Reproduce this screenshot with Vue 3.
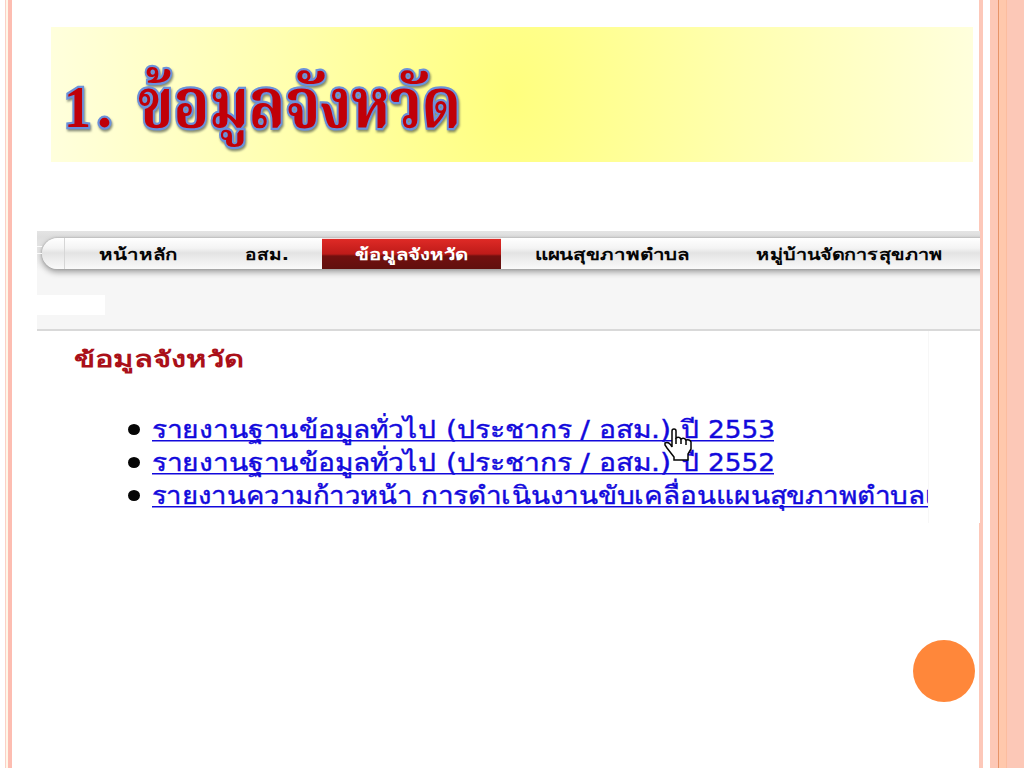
<template>
  <div class="slide">
    <div class="rail-left"></div>

    <main class="content">
      <header class="title-band">
        <svg class="title" width="420" height="110" role="img">
          <text class="title-text" x="13" y="75" textLength="27" lengthAdjust="spacingAndGlyphs">1</text>
          <text class="title-text" x="46" y="75" textLength="15" lengthAdjust="spacingAndGlyphs">.</text>
          <text class="title-text thai" x="87" y="75" textLength="323" lengthAdjust="spacingAndGlyphs">ข้อมูลจังหวัด</text>
        </svg>
      </header>

      <section class="site">
        <div class="site-top">
          <nav class="menu">
            <div class="menu-cap"></div>
            <a
              v-for="item in menu"
              :key="item.label"
              class="menu-item"
              :class="{ active: item.active }"
              :style="{ width: item.width + 'px' }"
            >
              <svg :width="item.text" height="32">
                <text x="0" y="22" :textLength="item.text" lengthAdjust="spacingAndGlyphs">{{ item.label }}</text>
              </svg>
            </a>
          </nav>
          <div class="blank-box"></div>
        </div>

        <div class="site-body">
          <svg class="heading" width="180" height="40">
            <text x="0" y="27" textLength="170" lengthAdjust="spacingAndGlyphs">ข้อมูลจังหวัด</text>
          </svg>
          <ul class="reports">
            <li v-for="(report, i) in reports" :key="i" class="report">
              <span class="bullet"></span>
              <svg class="report-link" :width="report.width" height="33">
                <text
                  v-for="part in report.parts"
                  :key="part.label"
                  :x="part.x"
                  y="25"
                  :textLength="part.width"
                  lengthAdjust="spacingAndGlyphs"
                >{{ part.label }}</text>
                <rect x="0" y="27" :width="report.width" height="1.5" />
              </svg>
            </li>
          </ul>
          <svg class="cursor" width="28" height="33" viewBox="0 0 28 33">
            <path
              d="M8 19V3Q8 1 10 1T12 3V10Q15 8 17 11Q20 9 22 12Q26 11 27 14V21L24 26V32H10V29L3 20L1 17V15Q5 13 8 19Z"
            />
            <path d="M12 10V16M17 11V16M22 12V17" />
          </svg>
        </div>
      </section>
    </main>

    <div class="rail-right"></div>
    <div class="dot"></div>
  </div>
</template>

<script setup>
const menu = [
  { label: 'หน้าหลัก', width: 146, text: 79 },
  { label: 'อสม.', width: 111, text: 44 },
  { label: 'ข้อมูลจังหวัด', width: 179, text: 113, active: true },
  { label: 'แผนสุขภาพตำบล', width: 222, text: 155 },
  { label: 'หมู่บ้านจัดการสุขภาพ', width: 253, text: 187 }
]

const yearReport = (year) => ({
  width: 622,
  parts: [
    { label: 'รายงานฐานข้อมูลทั่วไป', x: 0, width: 284 },
    { label: '(ประชากร / อสม.)', x: 294, width: 225 },
    { label: 'ปี', x: 529, width: 18 },
    { label: year, x: 556, width: 67 }
  ]
})

const reports = [
  yearReport('2553'),
  yearReport('2552'),
  // last title runs past the edge and gets cut off
  {
    width: 776,
    parts: [
      { label: 'รายงานความก้าวหน้า', x: 0, width: 260 },
      { label: 'การดำเนินงานขับเคลื่อนแผนสุขภาพตำบลเ', x: 269, width: 514 }
    ]
  }
]
</script>

<style>
body {
  margin: 0;
  background: #fff;
}
</style>

<style scoped>
.slide {
  position: relative;
  display: flex;
  width: 1024px;
  height: 768px;
  overflow: hidden;
  background: #fff;
  font-family: "DejaVu Sans", "Noto Sans", sans-serif;
}

.rail-left {
  flex: none;
  width: 12px;
  background: linear-gradient(to right, #fff 5px, #fbd0c5 5px 6px, #fff6e8 6px 8px, #fdbdb1 8px);
}

.rail-right {
  flex: none;
  width: 45px;
  background: linear-gradient(
    to right,
    #fdc8b9 4.5px,
    #fff 4.5px 11px,
    #fdc8b6 11px 19px,
    #e79468 19px 20px,
    #ffc8ac 20px 27px,
    #fcbd9f 27px 28px,
    #fcc8b7 28px
  );
}

.content {
  flex: none;
  width: 967px;
}

.title-band {
  width: 922px;
  height: 135px;
  margin: 27px 0 0 39px;
  background: radial-gradient(ellipse 461px 700px at 461px 67px, #ffff7e 0%, #ffffb0 50%, #ffffdc 100%);
}

.title {
  display: block;
  padding-top: 25px;
  overflow: visible;
  filter: drop-shadow(1px 2px 1px rgba(70, 80, 70, 0.65));
}

.title-text {
  font-family: "Liberation Serif", "Noto Serif Thai", serif;
  font-size: 60px;
  font-weight: bold;
  fill: #c00008;
  stroke: #6b91db;
  stroke-width: 4.5px;
  paint-order: stroke;
}

.thai {
  font-size: 69px;
}

.site {
  position: relative;
  z-index: 1;
  width: 943px;
  height: 292px;
  margin: 69px 0 0 25px;
  overflow: hidden;
  background: #fff;
}

.site-top {
  box-sizing: border-box;
  height: 100px;
  padding-top: 7px;
  border-bottom: 2px solid #d9d9d9;
  background: linear-gradient(#e4e4e4 0, #dedede 6px, #e4e4e4 16px, #f6f6f6 40px);
}

.menu {
  position: relative;
  display: flex;
  box-sizing: border-box;
  width: 950px;
  height: 31px;
  margin-left: 5px;
  border-radius: 16px 0 0 16px;
  background: linear-gradient(#fff 0, #f4f4f4 10px, #e3e3e3 15px, #efefef 23px, #fafafa 31px);
  box-shadow: 0 0 2px #999, 0 3px 6px rgba(0, 0, 0, 0.38);
}

/* small tab sticking out of the rounded end */
.menu::before {
  content: "";
  position: absolute;
  top: 8px;
  left: -5px;
  width: 5px;
  height: 6px;
  border-top: 1px solid #fafafa;
  border-bottom: 1px solid #fafafa;
}

.menu-cap {
  box-sizing: border-box;
  flex: none;
  width: 23px;
  border-right: 1px solid #d6d6d6;
}

.menu-item {
  display: flex;
  flex: none;
  justify-content: center;
  font-size: 16px;
  font-weight: bold;
  fill: #050505;
}

.menu-item svg {
  display: block;
  overflow: visible;
}

.active {
  box-sizing: border-box;
  height: 31px;
  border-top: 1px solid #f3e0e0;
  background: linear-gradient(#df2a26 0, #be1b19 15px, #72100f 17px, #61100e 100%);
  fill: #fff;
}

.active svg {
  margin-top: -1px;
}

.blank-box {
  width: 68px;
  height: 20px;
  margin-top: 26px;
  background: #fff;
}

.site-body {
  position: relative;
  box-sizing: border-box;
  width: 892px;
  height: 192px;
  padding-top: 9px;
  border-right: 1px solid #f7f7f7;
}

.heading {
  display: block;
  margin-left: 37px;
  overflow: visible;
  font-size: 22px;
  font-weight: bold;
  fill: #aa1019;
}

.reports {
  width: 891px;
  margin: 33px 0 0;
  padding: 0;
  overflow: hidden;
  list-style: none;
}

.report {
  display: flex;
  align-items: center;
  height: 33px;
  padding-left: 91px;
}

.bullet {
  flex: none;
  width: 12px;
  height: 11px;
  margin-right: 12px;
  border-radius: 50%;
  background: #050505;
}

.report-link {
  display: block;
  flex: none;
  overflow: visible;
  font-size: 25px;
  fill: #1209dc;
}

.report-link text {
  stroke: #1209dc;
  stroke-width: 0.4px;
}

/* hand pointer lies over the links */
.cursor {
  position: absolute;
  top: 97px;
  left: 627px;
  fill: #fff;
  stroke: #050505;
  stroke-width: 1.5px;
}

.dot {
  position: absolute;
  top: 640px;
  left: 913px;
  width: 62px;
  height: 62px;
  border-radius: 50%;
  background: #ff873a;
}
</style>
